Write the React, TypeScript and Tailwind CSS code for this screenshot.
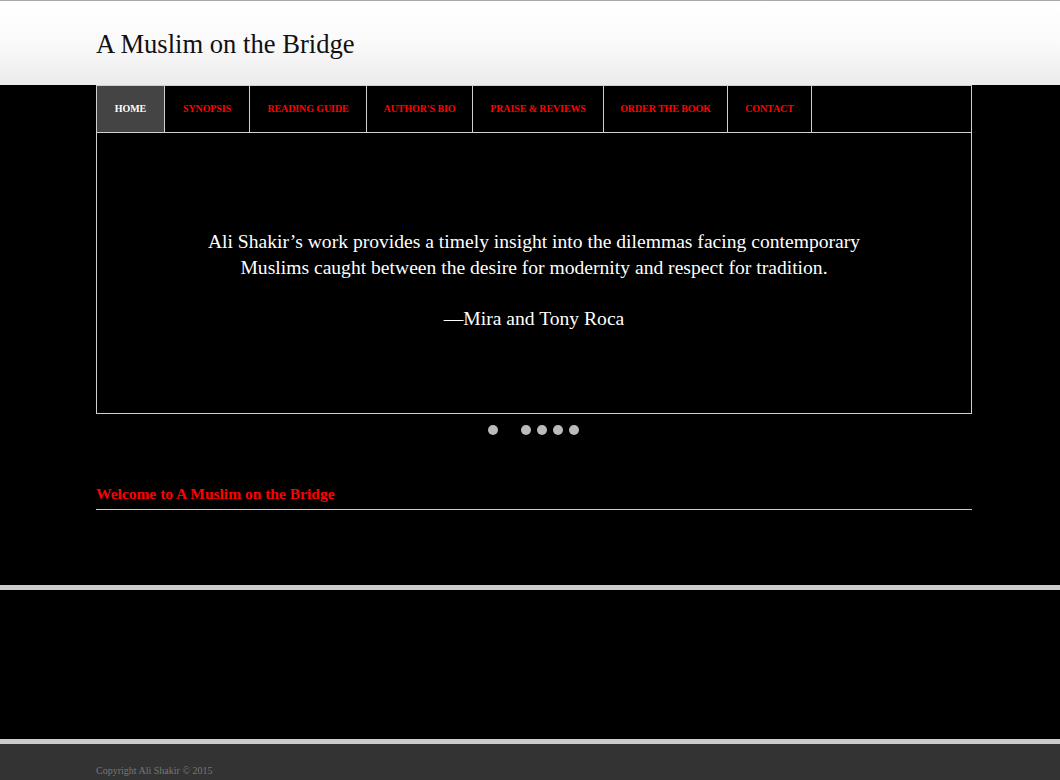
import React from "react";

const navItems = [
  { label: "HOME", w: "w-[68px]", active: true },
  { label: "SYNOPSIS", w: "w-[85px]" },
  { label: "READING GUIDE", w: "w-[117px]" },
  { label: "AUTHOR'S BIO", w: "w-[106px]" },
  { label: "PRAISE & REVIEWS", w: "w-[131px]" },
  { label: "ORDER THE BOOK", w: "w-[124px]" },
  { label: "CONTACT", w: "w-[84px]" },
];

export default function App() {
  return (
    <div className="min-h-[780px] bg-black" style={{ fontFamily: '"Liberation Serif", serif' }}>
      {/* Header */}
      <header className="h-[85px] border-t border-[#a9a9a9] bg-gradient-to-b from-white via-[#fafafa] to-[#ebebeb]">
        <div className="mx-[96px] pt-[26px]">
          <h1 className="text-[26.6px] leading-[34px] text-[#111]">A Muslim on the Bridge</h1>
        </div>
      </header>

      {/* Main */}
      <main className="bg-black">
        <div className="mx-[96px] w-[876px]">
          <nav className="flex h-[48px] border border-[#d0d0d0]">
            {navItems.map((it) => (
              <div
                key={it.label}
                className={`${it.w} flex items-center justify-center border-r border-[#d0d0d0] pb-[2px] text-[10px] font-bold tracking-[-0.1px] ${
                  it.active ? "bg-[#444444] text-white" : "text-[#ff0000]"
                }`}
              >
                {it.label}
              </div>
            ))}
          </nav>
          <section className="flex h-[281px] flex-col items-center justify-center border-x border-b border-[#d0d0d0] pt-[14px] text-center text-[19.6px] leading-[26px] text-white">
            <p>
              Ali Shakir&rsquo;s work provides a timely insight into the dilemmas facing contemporary
              <br />
              Muslims caught between the desire for modernity and respect for tradition.
            </p>
            <p className="mt-[25px]">&mdash;Mira and Tony Roca</p>
          </section>
          <div className="flex justify-center gap-[6px] pt-[11px] pr-[1px]">
            <span className="h-[10px] w-[10px] rounded-full bg-[#bbbbbb]" />
            <span className="h-[10px] w-[10px] rounded-full bg-black" />
            <span className="ml-[1px] h-[10px] w-[10px] rounded-full bg-[#bbbbbb]" />
            <span className="h-[10px] w-[10px] rounded-full bg-[#bbbbbb]" />
            <span className="h-[10px] w-[10px] rounded-full bg-[#bbbbbb]" />
            <span className="h-[10px] w-[10px] rounded-full bg-[#bbbbbb]" />
          </div>
          <div className="mt-[49px] border-b border-[#cccccc] pb-[5px]">
            <h2 className="text-[15.5px] font-bold leading-[20px] text-[#ff0000]">Welcome to A Muslim on the Bridge</h2>
          </div>
          <div className="h-[75px]" />
        </div>
      </main>

      <div className="h-[5px] bg-[#cccccc]" />
      <div className="h-[149px] bg-black" />
      <div className="h-[5px] bg-[#cccccc]" />
      <footer className="h-[60px] bg-[#333333]">
        <div className="mx-[96px] pt-[20px] text-[10px] leading-[14px] text-[#777777]">Copyright Ali Shakir &copy; 2015</div>
      </footer>
    </div>
  );
}
